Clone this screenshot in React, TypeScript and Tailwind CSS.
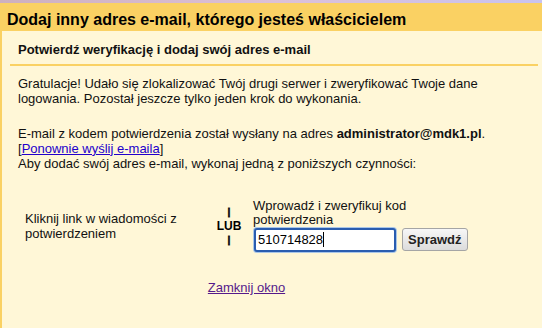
import React from "react";

export default function App() {
  return (
    <div className="w-[542px] h-[328px] overflow-hidden bg-[#fff7d7] font-['Liberation_Sans',Arial,sans-serif] text-[#111] text-[13px] flex flex-col">
      <div className="h-[3px] bg-gradient-to-r from-[#cdb0bf] via-[#dcc0d6] to-[#c9c3ef]" />
      <div className="bg-[#fad163] pl-[7px] pt-[8px] pb-[2px] text-[16px] leading-[18px] font-bold text-black">
        Dodaj inny adres e-mail, którego jesteś właścicielem
      </div>
      <div className="flex-1 border-l-2 border-[#fad163] pl-[8px] pr-[4px]">
        <div className="border-b-2 border-[#fad163] pl-[8px] pt-[10.5px] pb-[7px] font-bold leading-[15px]">
          Potwierdź weryfikację i dodaj swój adres e-mail
        </div>
        <div className="px-[8px] leading-[15.3px]">
          <p className="mt-[10px]">
            Gratulacje! Udało się zlokalizować Twój drugi serwer i zweryfikować Twoje dane logowania. Pozostał jeszcze tylko jeden krok do wykonania.
          </p>
          <p className="mt-[19.5px]">
            E-mail z kodem potwierdzenia został wysłany na adres <b className="font-bold">administrator@mdk1.pl</b>.
            <br />[
            <a href="#" className="text-[#2200cc] underline">Ponownie wyślij e-maila</a>]
            <br />
            Aby dodać swój adres e-mail, wykonaj jedną z poniższych czynności:
          </p>
          <div className="mt-[27.5px] ml-[7px] w-fit">
            <div className="flex items-center">
              <div className="w-[180px] leading-[15px]">Kliknij link w wiadomości z potwierdzeniem</div>
              <div className="w-[48px] flex flex-col items-center font-bold text-[12px] leading-[14px] text-black">
                <span className="text-[8.5px] font-bold text-[#111] [-webkit-text-stroke:0.8px_#111]">|</span>
                <span>LUB</span>
                <span className="text-[8.5px] font-bold text-[#111] [-webkit-text-stroke:0.8px_#111]">|</span>
              </div>
              <div className="w-[215px]">
                <div className="leading-[14px]">Wprowadź i zweryfikuj kod potwierdzenia</div>
                <div className="flex items-center gap-[6px] h-[26px]">
                  <div className="ml-[1px] w-[142px] h-[24px] border-2 border-[#2a5db0] rounded-[3px] shadow-[0_0_0_1px_#a9c6e8] bg-white flex items-center px-[2px] text-black">
                    <span>510714828</span>
                    <span className="inline-block w-px h-[15px] bg-black" />
                  </div>
                  <button className="h-[23px] px-[5.5px] border border-[#a5a5a5] rounded-[3px] bg-gradient-to-b from-[#f7f7f7] to-[#dcdcdc] font-bold text-[13px] text-[#222] leading-none">
                    Sprawdź
                  </button>
                </div>
              </div>
            </div>
            <div className="mt-[27.5px] text-center leading-[15px]">
              <a href="#" className="text-[#551a8b] underline">Zamknij okno</a>
            </div>
          </div>
        </div>
      </div>
    </div>
  );
}
